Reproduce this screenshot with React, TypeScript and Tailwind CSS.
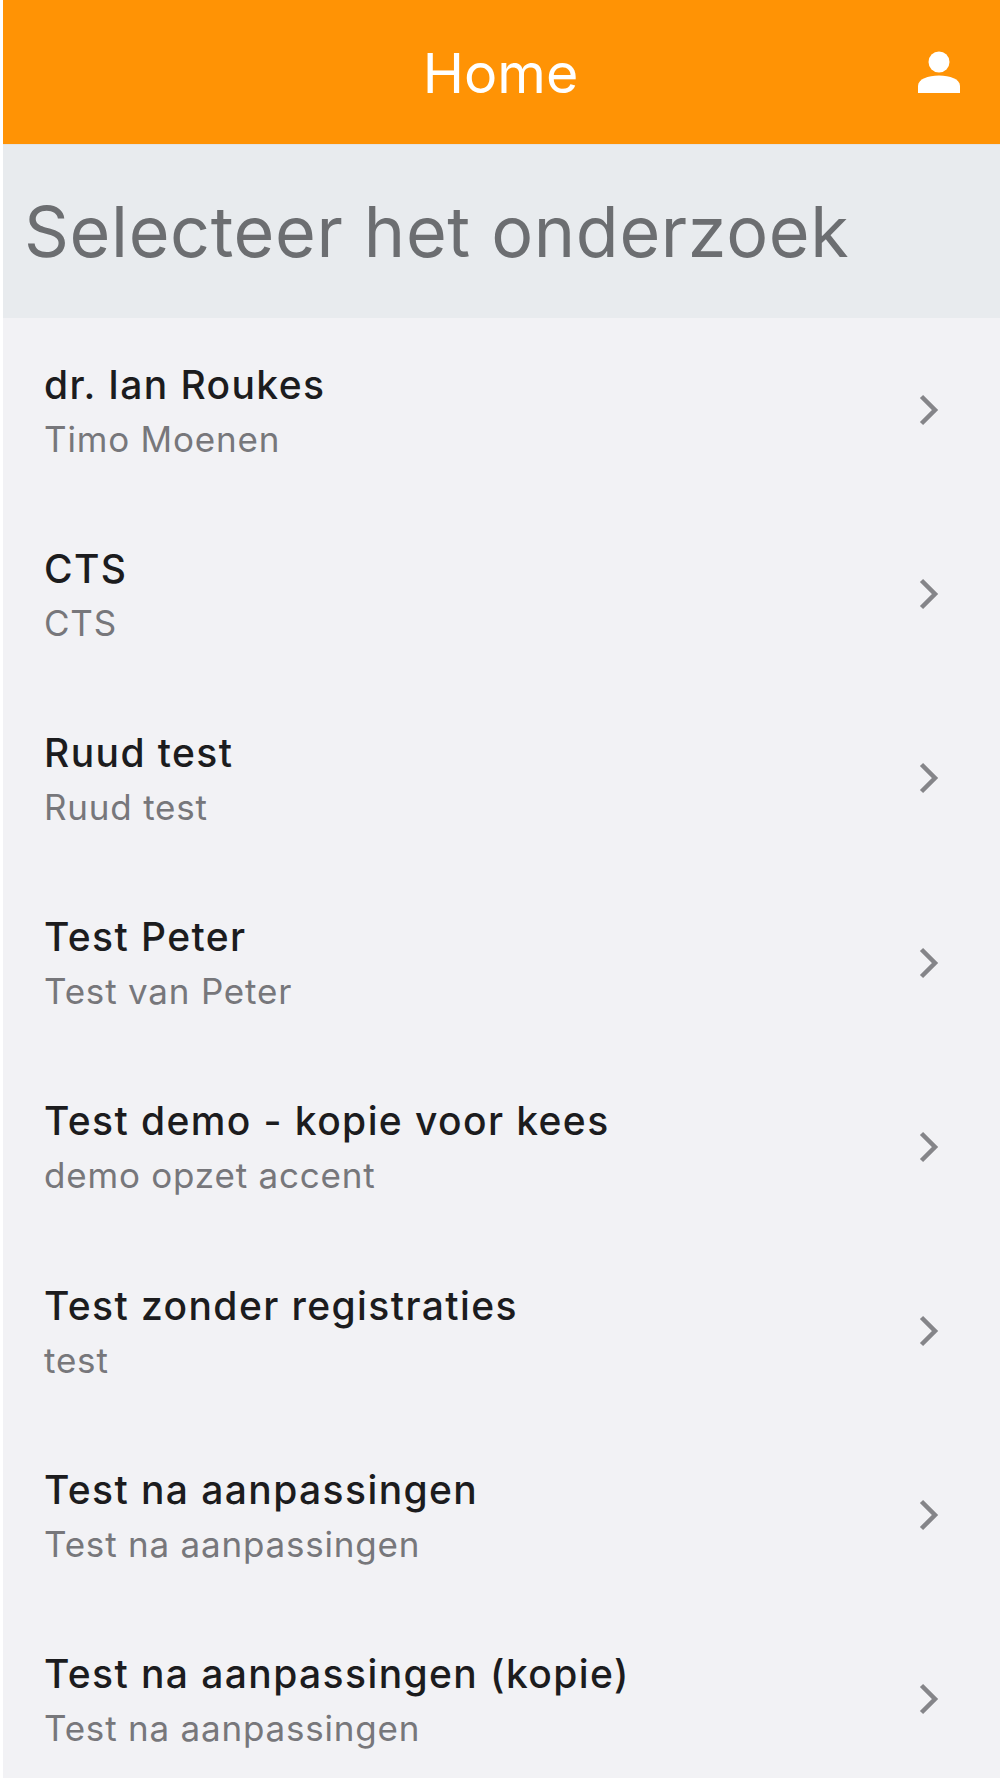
const rows = [
  ["dr. Ian Roukes", "Timo Moenen"],
  ["CTS", "CTS"],
  ["Ruud test", "Ruud test"],
  ["Test Peter", "Test van Peter"],
  ["Test demo - kopie voor kees", "demo opzet accent"],
  ["Test zonder registraties", "test"],
  ["Test na aanpassingen", "Test na aanpassingen"],
  ["Test na aanpassingen (kopie)", "Test na aanpassingen"],
];

function UserIcon() {
  return (
    <svg width="42" height="42" viewBox="0 0 42 42" fill="#fff">
      <circle cx="21" cy="11" r="10.5" />
      <path d="M0 42v-7C0 28 10 24.5 21 24.5S42 28 42 35v7z" />
    </svg>
  );
}

function Chevron() {
  return (
    <svg width="20" height="32" viewBox="0 0 20 32" fill="none" stroke="#858589" strokeWidth="4.5">
      <path d="M2.5 2.5 16 16 2.5 29.5" />
    </svg>
  );
}

function App() {
  return (
    <div className="h-[1778px] overflow-hidden bg-white pl-[3px] font-['Inter',sans-serif]">
      <header className="grid h-[144px] grid-cols-[1fr_auto_1fr] items-center bg-[#ff9305] px-[40px]">
        <span />
        <h1 className="mt-[2px] mr-[2px] text-[55.5px] font-normal leading-none text-white">Home</h1>
        <div className="flex justify-end">
          <UserIcon />
        </div>
      </header>
      <div className="flex h-[174px] items-center border-t border-[#e3e3e3] bg-[#e8ebee] pl-[21px]">
        <h2 className="text-[70px] font-normal leading-none tracking-[0.65px] text-[#6c6e71]">Selecteer het onderzoek</h2>
      </div>
      <ul className="bg-[#f2f2f5]">
        {rows.map(([title, sub]) => (
          <li key={title} className="flex h-[184.2px] items-center justify-between pl-[41px] pr-[61px]">
            <div>
              <p className="text-[39px] font-[450] leading-[58px] tracking-[1.4px] text-[#1c1c1e]">{title}</p>
              <p className="text-[35px] leading-[51px] tracking-[0.8px] text-[#77777b]">{sub}</p>
            </div>
            <Chevron />
          </li>
        ))}
      </ul>
    </div>
  );
}

export default App;
